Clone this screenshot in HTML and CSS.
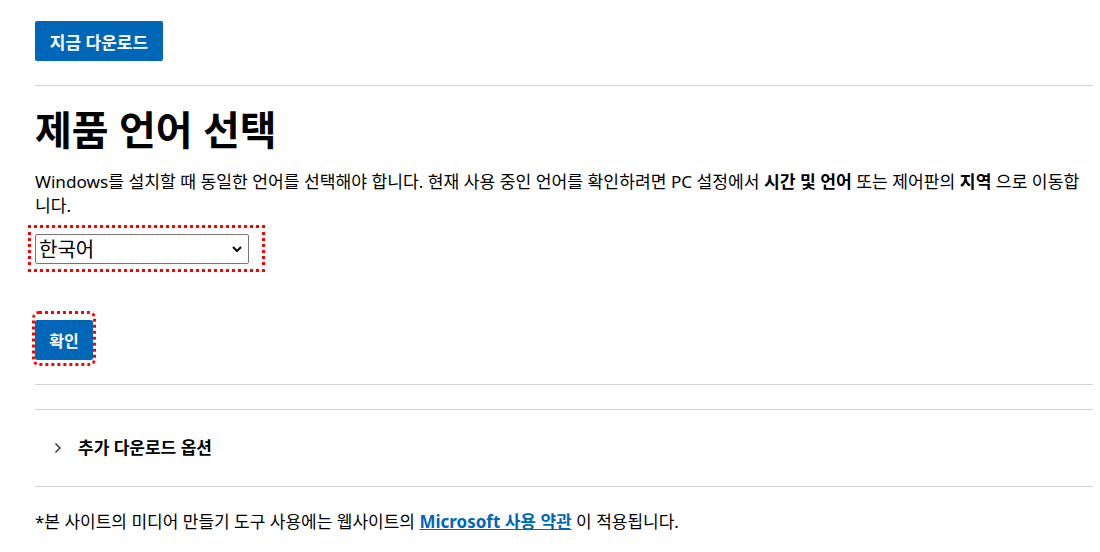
FILE: index.html
```html
<!DOCTYPE html>
<html lang="ko">
<head>
<meta charset="utf-8">
<title>제품 언어 선택</title>
<link rel="stylesheet" href="styles.css">
</head>
<body>
<main class="page">
  <div class="download-row">
    <a class="btn-primary" href="#">지금 다운로드</a>
  </div>
  <hr class="rule rule-top">
  <h1 class="title">제품 언어 선택</h1>
  <p class="desc">Windows를 설치할 때 동일한 언어를 선택해야 합니다. 현재 사용 중인 언어를 확인하려면 PC 설정에서 <b>시간 및 언어</b> 또는 제어판의 <b>지역</b> 으로 이동합니다.</p>
  <div class="select-focus">
    <div class="select-box">
      <select class="lang-select">
        <option>한국어</option>
      </select>
      <svg class="select-arrow" width="10" height="6" viewBox="0 0 10 6"><path d="M1 1 L5 5 L9 1" fill="none" stroke="#000" stroke-width="2"/></svg>
    </div>
  </div>
  <div class="confirm-focus">
    <button class="btn-confirm">확인</button>
  </div>
  <hr class="rule rule-a">
  <hr class="rule rule-b">
  <div class="accordion">
    <svg class="chev" width="8" height="12" viewBox="0 0 8 12"><path d="M1.5 1.5 L6 6 L1.5 10.5" fill="none" stroke="#444" stroke-width="1.6"/></svg>
    <span class="accordion-label">추가 다운로드 옵션</span>
  </div>
  <hr class="rule rule-c">
  <p class="footnote">*본 사이트의 미디어 만들기 도구 사용에는 웹사이트의 <a class="link" href="#">Microsoft 사용 약관</a> 이 적용됩니다.</p>
</main>
</body>
</html>
```
FILE: styles.css
```css
* { box-sizing: border-box; }
html, body { margin: 0; padding: 0; background: #fff; }
body {
  font-family: "Noto Sans", "Noto Sans CJK KR", sans-serif;
  color: #000;
}
.page { padding: 21px 7px 0 35px; }
.download-row { height: 40px; }
.btn-primary {
  display: inline-flex;
  align-items: center;
  justify-content: center;
  width: 128px;
  height: 40px;
  background: #0067b8;
  color: #fff;
  font-size: 17px;
  font-weight: 600;
  text-decoration: none;
  border-radius: 2px;
}
.rule { border: 0; border-top: 1px solid #d2d2d2; height: 0; margin: 0; }
.rule-top { margin-top: 24px; }
.title {
  font-size: 40px;
  font-weight: 700;
  line-height: 52px;
  margin: 18px 0 0;
}
.desc {
  font-size: 17.15px;
  line-height: 24px;
  margin: 14px 0 0;
  padding-right: 8px;
}
.desc b { font-weight: 700; }
.select-focus {
  display: inline-block;
  margin: 7px 0 0 -7px;
  border: 3px dotted #f00;
  padding: 6px 13px 5px 4px;
}
.select-box { position: relative; width: 214px; height: 30px; }
.lang-select {
  appearance: none;
  -webkit-appearance: none;
  width: 214px;
  height: 30px;
  border: 1px solid #767676;
  border-radius: 2px;
  background: #fff;
  font-family: "Noto Sans CJK KR", sans-serif;
  font-size: 20px;
  line-height: 28px;
  color: #000;
  padding: 0 0 0 3px;
  margin: 0;
}
.select-arrow { position: absolute; right: 7px; top: 12px; pointer-events: none; }
.confirm-focus {
  width: 58px;
  height: 49px;
  margin-top: 42px;
  padding-top: 6px;
  outline: 3px dotted #f00;
  border-radius: 4px;
  margin-left: 0;
}
.btn-confirm {
  display: flex;
  align-items: center;
  justify-content: center;
  width: 58px;
  height: 40px;
  border: 0;
  margin: 0;
  background: #0067b8;
  color: #fff;
  font-family: "Noto Sans CJK KR", sans-serif;
  font-size: 16px;
  font-weight: 700;
  border-radius: 2px;
}
.rule-a { margin-top: 21px; }
.rule-b { margin-top: 24px; }
.accordion {
  display: flex;
  align-items: center;
  padding: 26px 0 26px 19px;
  height: 76px;
}
.chev { flex: none; margin-right: 16px; }
.accordion-label { font-size: 17px; font-weight: 700; line-height: 24px; }
.footnote {
  font-size: 17px;
  line-height: 24px;
  margin: 23px 0 0;
}
.link { color: #0067b8; font-weight: 700; text-decoration: underline; }
```
